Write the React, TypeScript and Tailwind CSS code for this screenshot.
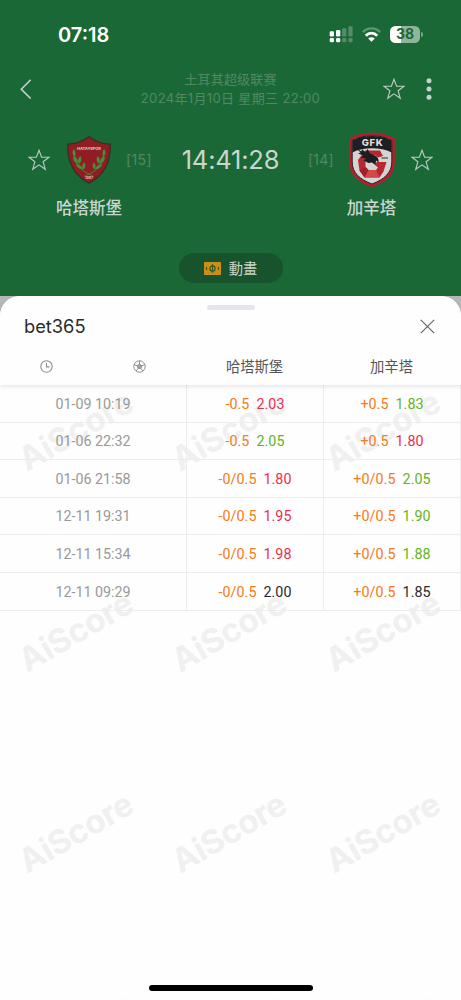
import React from 'react';

interface OddsRow {
  time: string;
  home: [string, string, string];
  away: [string, string, string];
}

const RED = 'text-[#ea2e50]';
const GREEN = 'text-[#64b41c]';
const BLACK = 'text-[#2b2b2b]';

const rows: OddsRow[] = [
  { time: '01-09 10:19', home: ['-0.5', '2.03', RED], away: ['+0.5', '1.83', GREEN] },
  { time: '01-06 22:32', home: ['-0.5', '2.05', GREEN], away: ['+0.5', '1.80', RED] },
  { time: '01-06 21:58', home: ['-0/0.5', '1.80', RED], away: ['+0/0.5', '2.05', GREEN] },
  { time: '12-11 19:31', home: ['-0/0.5', '1.95', RED], away: ['+0/0.5', '1.90', GREEN] },
  { time: '12-11 15:34', home: ['-0/0.5', '1.98', RED], away: ['+0/0.5', '1.88', GREEN] },
  { time: '12-11 09:29', home: ['-0/0.5', '2.00', BLACK], away: ['+0/0.5', '1.85', BLACK] },
];

const Star = () => (
  <svg className="h-[22px] w-[22px] shrink-0" viewBox="0 0 22 22" fill="none" stroke="#bccbc1" strokeWidth="1.1">
    <path d="M11 1.2 13.6 8.2H21L15.1 12.7 17.3 20.3 11 15.9 4.7 20.3 6.9 12.7 1 8.2H8.4Z" strokeLinejoin="miter" />
  </svg>
);

const StatusBar = () => (
  <div className="flex h-[68px] items-center justify-between pl-[58px] pr-[38px]">
    <span className="w-[54px] pt-[2px] text-[20px] font-semibold leading-none text-white">07:18</span>
    <div className="flex items-center gap-[9px]">
      <svg className="h-[17px] w-[24px]" viewBox="0 0 24 17">
        <g fill="#fff">
          <rect x="0.7" y="5.3" width="4.3" height="5.2" rx="1.2" />
          <rect x="7" y="4" width="4.3" height="6.5" rx="1.2" />
          <rect x="0.7" y="12" width="4.3" height="4.3" rx="1.4" />
          <rect x="7" y="12" width="4.3" height="4.3" rx="1.4" />
        </g>
        <g fill="#fff" opacity="0.25">
          <rect x="13.2" y="2.2" width="4.2" height="8.3" rx="1.2" />
          <rect x="19.4" y="0.2" width="4.2" height="10.3" rx="1.2" />
          <rect x="13.2" y="12" width="4.2" height="4.3" rx="1.4" />
          <rect x="19.4" y="12" width="4.2" height="4.3" rx="1.4" />
        </g>
      </svg>
      <svg className="h-[15px] w-[19px]" viewBox="0 0 19 15" fill="none" stroke="#fff">
        <path d="M.9 5.1C5.8.2 13.2.2 18.1 5.1" strokeWidth="2.3" opacity="0.3" />
        <path d="M3.8 8.7C7.1 5.2 11.9 5.2 15.2 8.7" strokeWidth="2.9" />
        <path d="M9.5 14.8 6.2 11.6C8.1 9.9 10.9 9.9 12.8 11.6Z" fill="#fff" stroke="none" />
      </svg>
      <div className="flex items-center gap-[1px]">
        <div className="flex h-[17px] w-[30px] items-center justify-center rounded-[5.5px] bg-[linear-gradient(90deg,#fff_38%,#8fb69c_38%)] text-[14px] font-bold leading-none text-[#1b6837]">
          38
        </div>
        <div className="h-[5px] w-[2px] rounded-r-full bg-[#76a586]" />
      </div>
    </div>
  </div>
);

const HomeCrest = () => (
  <svg className="h-[48px] w-[44px]" viewBox="0 0 44 48">
    <path
      d="M22 .8C16 5.2 9 8.2.8 8.2.3 24 5 38.5 22 47.2 39 38.5 43.7 24 43.2 8.2 35 8.2 28 5.2 22 .8Z"
      fill="#911d24"
      stroke="#382f25"
      strokeWidth="1.3"
    />
    <text x="22" y="13.8" textAnchor="middle" fontSize="4" fontWeight="800" fill="#d5b9b5" textLength="24">
      HATAYSPOR
    </text>
    <g fill="none" stroke="#3f8a38" strokeWidth="0.9" strokeLinecap="round">
      <path d="M7.5 15C6.5 27 13 35 26 40" />
      <path d="M36.5 15C37.5 27 31 35 18 40" />
    </g>
    <g fill="#459039">
      <path d="M7 13C4.5 16 5.5 19 8 21 9 18 8.5 15.5 7 13Z" />
      <path d="M6.5 20C5.5 24 8 27 11 27.5 11.3 24 9.5 21.5 6.5 20Z" />
      <path d="M13.5 20C10.5 22.5 10.5 25.5 12 28 14.5 26 15 23 13.5 20Z" />
      <path d="M9 28C9.5 31 12.5 33.5 16 33 15 30 12 28 9 28Z" />
      <path d="M17.5 26.5C14.8 28.5 14.8 31 16.5 33.5 18.5 31.5 19 29 17.5 26.5Z" />
      <path d="M37 13C39.5 16 38.5 19 36 21 35 18 35.5 15.5 37 13Z" />
      <path d="M37.5 20C38.5 24 36 27 33 27.5 32.7 24 34.5 21.5 37.5 20Z" />
      <path d="M30.5 20C33.5 22.5 33.5 25.5 32 28 29.5 26 29 23 30.5 20Z" />
      <path d="M35 28C34.5 31 31.5 33.5 28 33 29 30 32 28 35 28Z" />
      <path d="M26.5 26.5C29.2 28.5 29.2 31 27.5 33.5 25.5 31.5 25 29 26.5 26.5Z" />
    </g>
    <text x="22" y="43" textAnchor="middle" fontSize="3.5" fontWeight="800" fill="#d5b9b5">
      1967
    </text>
  </svg>
);

const AwayCrest = () => (
  <svg className="h-[56px] w-[48px]" viewBox="0 0 48 56">
    <path
      d="M24 .8C16 .8 8 2.5 1.2 6.5V30C1.2 43 10 50 24 55.2 38 50 46.8 43 46.8 30V6.5C40 2.5 32 .8 24 .8Z"
      fill="#b51f2b"
    />
    <path
      d="M24 3.8C16.5 3.8 10 5.2 4.2 8.5V30C4.2 41 12 47.5 24 52 36 47.5 43.8 41 43.8 30V8.5C38 5.2 31.5 3.8 24 3.8Z"
      fill="#d4d4d2"
      stroke="#24252a"
      strokeWidth="1"
    />
    <path d="M24 4C16.5 4 10 5.4 4.4 8.6V20.5C10 17.5 17 16.2 24 16.2S38 17.5 43.6 20.5V8.6C38 5.4 31.5 4 24 4Z" fill="#1d1f22" />
    <path d="M17 18.5H32L35 24 30 25.5 27 23H20L17.5 27V35L20.5 38H28L30 35.5 26.5 32.5 29 30H38.5L35.5 39.5 31.5 45.5H16.5L11.5 38.5 10 28Z" fill="#b82730" />
    <path d="M16.5 45.5 20.5 38H28L31.5 45.5Z" fill="#d04a48" />
    <path d="M11.5 38.5 17.5 35 20.5 38 16.5 45.5Z" fill="#a01f2a" />
    <path
      d="M8.5 16.5 13.5 19.5 14 17 17.5 20.5 19.5 17 22 21.5 27 23.5C30 25 31 27.5 30.5 30.5L28 28.5 27.5 33 24 30.5 20.5 31 15.5 28.5 18 26.5 12.5 25.5 15.5 23.5 10 21.5 12.5 20.5Z"
      fill="#1b1d21"
    />
    <path d="M33.5 26H40" stroke="#525257" strokeWidth="1.3" />
    <text x="24.2" y="13.8" textAnchor="middle" fontSize="9.5" fontWeight="800" fill="#dededd" textLength="21">
      GFK
    </text>
  </svg>
);

const MatchHeader = () => (
  <header className="h-[296px] bg-[#1b6837] text-[#cbd6cf]">
    <StatusBar />
    <div className="flex h-[42px] items-center px-[20px]">
      <div className="w-[76px]">
        <svg className="h-[20px] w-[12px]" viewBox="0 0 12 20" fill="none" stroke="#c5d1c9" strokeWidth="1.6">
          <path d="M10.7 .8 1.3 10.3 10.7 19.5" />
        </svg>
      </div>
      <div className="flex-1 whitespace-nowrap text-center text-[13px] leading-[19px] text-[#518963]">
        <p className="tracking-[0.2px]">土耳其超级联赛</p>
        <p className="tracking-[0.35px]">2024年1月10日 星期三 22:00</p>
      </div>
      <div className="flex w-[76px] items-center justify-end gap-[21px] pr-[9px]">
        <Star />
        <svg className="h-[22px] w-[6px] shrink-0" viewBox="0 0 6 22" fill="#c5d1c9">
          <circle cx="3" cy="2.8" r="2.5" />
          <circle cx="3" cy="11" r="2.5" />
          <circle cx="3" cy="19.2" r="2.5" />
        </svg>
      </div>
    </div>
    <div className="flex items-start justify-between px-[28px] pt-[18px]">
      <div className="flex">
        <div className="flex h-[64px] items-center">
          <Star />
        </div>
        <div className="ml-[6px] flex w-[66px] flex-col items-center">
          <div className="flex h-[64px] items-center">
            <HomeCrest />
          </div>
          <span className="mt-[4px] whitespace-nowrap text-[16.5px] font-medium leading-[24px]">哈塔斯堡</span>
        </div>
        <span className="ml-[4px] w-[27px] text-[14px] leading-[64px] tracking-[0.4px] text-[#518963]">[15]</span>
      </div>
      <span className="whitespace-nowrap text-[25.5px] leading-[64px] tracking-[-0.2px]">14:41:28</span>
      <div className="flex">
        <span className="mr-[4px] w-[27px] text-[14px] leading-[64px] tracking-[0.2px] text-[#518963]">[14]</span>
        <div className="mr-[6px] flex w-[66px] flex-col items-center">
          <div className="flex h-[64px] items-center pb-[1px]">
            <AwayCrest />
          </div>
          <span className="mt-[4px] whitespace-nowrap pr-[1px] text-[16.5px] font-medium leading-[24px]">加辛塔</span>
        </div>
        <div className="flex h-[64px] items-center">
          <Star />
        </div>
      </div>
    </div>
    <div className="mx-auto mt-[33px] flex h-[30px] w-[104px] items-center justify-center gap-[8px] rounded-full bg-[#17532c]">
      <svg className="h-[13px] w-[17px]" viewBox="0 0 17 13">
        <rect width="17" height="13" rx="0.8" fill="#cb8f18" />
        <g fill="none" stroke="#315b25" strokeWidth="1.2">
          <circle cx="8.5" cy="6.5" r="2.6" />
          <path d="M8.5 2.2V10.8M2.5 5V8M14.5 5V8" />
        </g>
      </svg>
      <span className="pt-[2px] text-[14.3px] leading-none">動畫</span>
    </div>
  </header>
);

const Watermark = () => (
  <div className="pointer-events-none absolute inset-x-0 top-[33px] grid grid-cols-[152px_154px_154px]">
    {Array.from({ length: 12 }, (_, i) => (
      <div key={i} className="flex h-[201px] items-start justify-center">
        <span className="-rotate-30 font-[Inter] text-[33px] font-bold leading-[25px] tracking-[-0.2px] text-[#f0f0f0]">
          AiScore
        </span>
      </div>
    ))}
  </div>
);

const Odds: React.FC<{ cell: [string, string, string] }> = ({ cell }) => (
  <div className="flex items-center justify-center gap-[7px] border-r border-[#ededf0] pt-[2px] tracking-[0.05px]">
    <span className="text-[#f57a20]">{cell[0]}</span>
    <span className={cell[2]}>{cell[1]}</span>
  </div>
);

const OddsSheet = () => (
  <section className="h-[704px] bg-[#b5b8b6]">
    <div className="flex h-full flex-col rounded-t-[20px] bg-[#fefefe]">
      <div className="relative z-10 h-[89px] shrink-0 rounded-t-[20px] bg-[#fefefe] shadow-[0_2px_4px_rgba(0,0,0,0.09)]">
        <div className="flex h-[16px] items-center justify-center pt-[7px]">
          <div className="h-[5px] w-[48px] rounded-[2px] bg-[#e5e6eb]" />
        </div>
        <div className="flex h-[28px] items-center justify-between pl-[24px] pr-[26px]">
          <h1 className="pt-[1px] text-[18.3px] leading-none text-[#2b2b2b]">bet365</h1>
          <button aria-label="Close">
            <svg className="h-[15px] w-[15px]" viewBox="0 0 15 15" stroke="#666" strokeWidth="1.2">
              <path d="M.8.8 14.2 14.2M14.2.8.8 14.2" />
            </svg>
          </button>
        </div>
        <div className="grid h-[45px] grid-cols-[93px_93px_137px_137px] items-center justify-items-center pb-[1px] pt-[8px] text-[14.3px] text-[#555]">
          <svg className="h-[13px] w-[13px]" viewBox="0 0 13 13" fill="none" stroke="#8e8e8e" strokeWidth="1.1">
            <circle cx="6.5" cy="6.5" r="5.7" />
            <path d="M6.5 3V6.9H9.5" />
          </svg>
          <svg className="h-[13px] w-[13px]" viewBox="0 0 13 13" fill="none" stroke="#8e8e8e" strokeWidth="1">
            <circle cx="6.5" cy="6.5" r="5.7" />
            <path d="M6.5 4.1 8.8 5.8 7.9 8.4H5.1L4.2 5.8Z" fill="#a4a4a4" />
            <path d="M6.5 4.1V.9M8.8 5.8 11.9 4.7M7.9 8.4 9.9 11M5.1 8.4 3.1 11M4.2 5.8 1.1 4.7" />
          </svg>
          <span className="pt-[1px]">哈塔斯堡</span>
          <span className="pt-[1px]">加辛塔</span>
        </div>
      </div>
      <div className="relative flex-1 overflow-hidden">
        <Watermark />
        <div className="relative font-[Roboto] text-[14.3px]">
          {rows.map((row) => (
            <div key={row.time} className="grid h-[37.6px] grid-cols-[187px_137px_137px] border-b border-[#ededf0]">
              <div className="flex items-center justify-center border-r border-[#ededf0] pt-[2px] text-[#999]">
                {row.time}
              </div>
              <Odds cell={row.home} />
              <Odds cell={row.away} />
            </div>
          ))}
        </div>
        <div className="absolute bottom-[9px] left-1/2 h-[6px] w-[164px] -translate-x-1/2 rounded-full bg-black" />
      </div>
    </div>
  </section>
);

const App = () => (
  <div className="h-[1000px] w-[461px] overflow-hidden font-['Inter','Noto_Sans_CJK_SC',sans-serif]">
    <MatchHeader />
    <OddsSheet />
  </div>
);

export default App;
